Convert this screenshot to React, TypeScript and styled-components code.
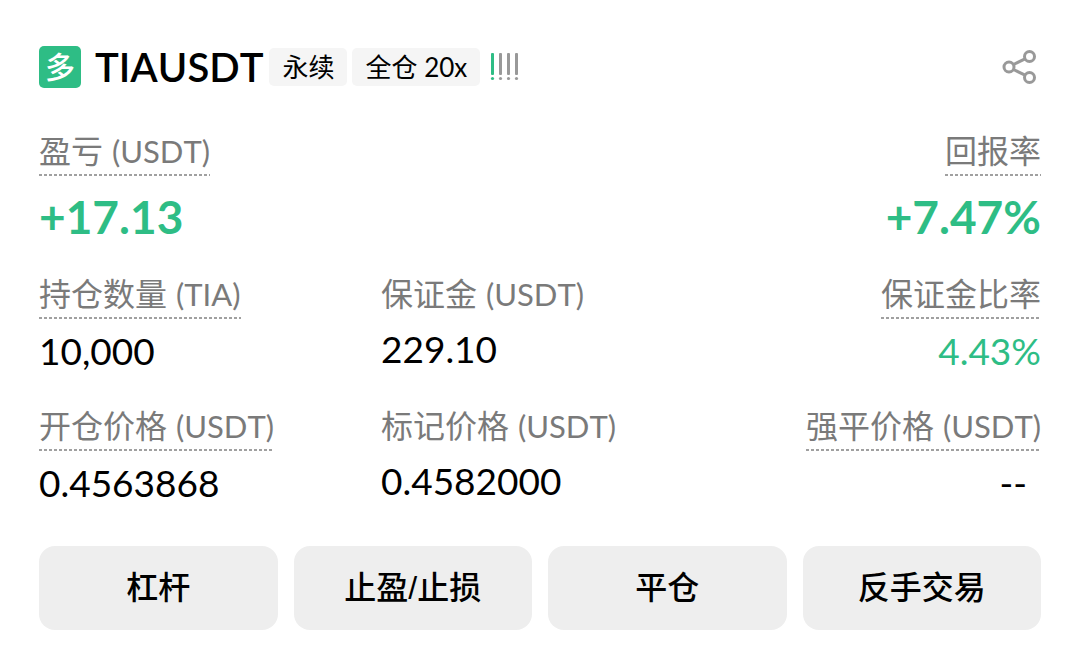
import React from "react";
import styled, { createGlobalStyle } from "styled-components";

const GREEN = "#2ebd85";
const GREY = "#7a7a7a";

const GlobalStyle = createGlobalStyle`
  *, *::before, *::after { box-sizing: border-box; }
  body {
    margin: 0;
    background: #ffffff;
    color: #000000;
    font-family: Lato, "Noto Sans CJK SC", sans-serif;
    font-kerning: none;
  }
`;

const Card = styled.main`
  padding: 44px 38px 24px 39px;
`;

const Header = styled.header`
  display: flex;
  align-items: center;
  height: 46px;
`;

const SideBadge = styled.span`
  display: flex;
  align-items: center;
  justify-content: center;
  width: 42px;
  height: 42px;
  margin-right: 14px;
  border-radius: 5px;
  background: ${GREEN};
  color: #ffffff;
  font-size: 30px;
  line-height: 40px;
  padding-bottom: 2px;
  font-weight: 500;
`;

const Symbol = styled.h1`
  margin: 0 6px 0 0;
  font-size: 40px;
  line-height: 46px;
  font-weight: 600;
`;

const Tag = styled.span`
  margin-right: 5px;
  padding: 0 13px;
  border-radius: 5px;
  background: #f5f5f5;
  font-size: 26px;
  line-height: 38px;
  white-space: nowrap;
`;

const RiskMeter = styled.svg`
  margin-left: 5px;
`;

const ShareButton = styled.button`
  display: flex;
  margin: 0 0 0 auto;
  padding: 0 4px 0 0;
  border: 0;
  background: none;
  color: #999999;
  cursor: pointer;
`;

const Summary = styled.dl`
  display: flex;
  justify-content: space-between;
  margin: 42px 0 0;
`;

const Details = styled.dl`
  display: grid;
  grid-template-columns: repeat(3, minmax(0, 1fr));
  column-gap: 24px;
  row-gap: 32px;
  margin: 30px 0 0;
`;

const Stat = styled.div<{ $end?: boolean }>`
  display: flex;
  flex-direction: column;
  align-items: ${(p) => (p.$end ? "flex-end" : "flex-start")};
  white-space: nowrap;
`;

const Label = styled.dt<{ $hint?: boolean }>`
  padding-bottom: ${(p) => (p.$hint ? 6 : 4)}px;
  color: ${GREY};
  font-size: 32px;
  line-height: 38px;
  background: ${(p) =>
    p.$hint
      ? "repeating-linear-gradient(90deg, #a0a0a0 0 3px, transparent 3px 5px) left bottom / 100% 2px no-repeat"
      : "none"};
`;

const Unit = styled.span`
  margin-left: 1px;
  font-size: 31px;
`;

const Value = styled.dd<{ $positive?: boolean }>`
  margin: 8px 0 0;
  font-size: 37px;
  line-height: 48px;
  color: ${(p) => (p.$positive ? GREEN : "inherit")};
`;

const Headline = styled(Value)`
  margin-top: 13px;
  font-size: 46px;
  line-height: 56px;
  font-weight: 700;
`;

const Empty = styled.span`
  padding-right: 14px;
`;

const Actions = styled.div`
  display: grid;
  grid-template-columns: repeat(4, minmax(0, 1fr));
  gap: 16px;
  margin-top: 39px;
`;

const Action = styled.button`
  height: 84px;
  padding: 0;
  border: 0;
  border-radius: 16px;
  background: #eeeeee;
  color: #000000;
  font-family: "Liberation Sans", "Noto Sans CJK SC", sans-serif;
  font-size: 32px;
  font-weight: 500;
  line-height: 40px;
  cursor: pointer;
`;

type StatData = {
  label: string;
  unit?: string;
  value: string;
  hint?: boolean;
  positive?: boolean;
  end?: boolean;
};

const stats: StatData[] = [
  { label: "持仓数量", unit: "TIA", value: "10,000", hint: true },
  { label: "保证金", unit: "USDT", value: "229.10" },
  { label: "保证金比率", value: "4.43%", hint: true, positive: true, end: true },
  { label: "开仓价格", unit: "USDT", value: "0.4563868", hint: true },
  { label: "标记价格", unit: "USDT", value: "0.4582000" },
  { label: "强平价格", unit: "USDT", value: "--", hint: true, end: true },
];

const actions = ["杠杆", "止盈/止损", "平仓", "反手交易"];

function StatLabel({ label, unit, hint }: Pick<StatData, "label" | "unit" | "hint">) {
  return (
    <Label $hint={hint}>
      {label}
      {unit && <Unit> ({unit})</Unit>}
    </Label>
  );
}

export default function App() {
  return (
    <>
      <GlobalStyle />
      <Card>
        <Header>
          <SideBadge>多</SideBadge>
          <Symbol>TIAUSDT</Symbol>
          <Tag>永续</Tag>
          <Tag>全仓 20x</Tag>
          <RiskMeter width="30" height="28" viewBox="0 0 30 28" aria-hidden="true">
            {[0, 1, 2, 3].map((i) => (
              <g key={i} fill={i === 0 ? GREEN : "#999999"}>
                <rect x={1 + i * 8} y="0" width="3" height="22" rx="1" />
                <circle cx={2.5 + i * 8} cy="25.5" r="1.6" />
              </g>
            ))}
          </RiskMeter>
          <ShareButton type="button" aria-label="分享">
            <svg width="36" height="36" viewBox="0 0 36 36" fill="none" stroke="currentColor" strokeWidth="3">
              <circle cx="8" cy="18" r="5" />
              <circle cx="28.5" cy="7.5" r="5" />
              <circle cx="28.5" cy="28.5" r="5" />
              <path d="M12.5 15.5 24 9.8M12.5 20.5 24 26.2" />
            </svg>
          </ShareButton>
        </Header>

        <Summary>
          <Stat>
            <StatLabel label="盈亏" unit="USDT" hint />
            <Headline $positive>+17.13</Headline>
          </Stat>
          <Stat $end>
            <StatLabel label="回报率" hint />
            <Headline $positive>+7.47%</Headline>
          </Stat>
        </Summary>

        <Details>
          {stats.map((s) => (
            <Stat key={s.label} $end={s.end}>
              <StatLabel label={s.label} unit={s.unit} hint={s.hint} />
              <Value $positive={s.positive}>
                {s.value === "--" ? <Empty>--</Empty> : s.value}
              </Value>
            </Stat>
          ))}
        </Details>

        <Actions>
          {actions.map((name) => (
            <Action key={name} type="button">
              {name}
            </Action>
          ))}
        </Actions>
      </Card>
    </>
  );
}
